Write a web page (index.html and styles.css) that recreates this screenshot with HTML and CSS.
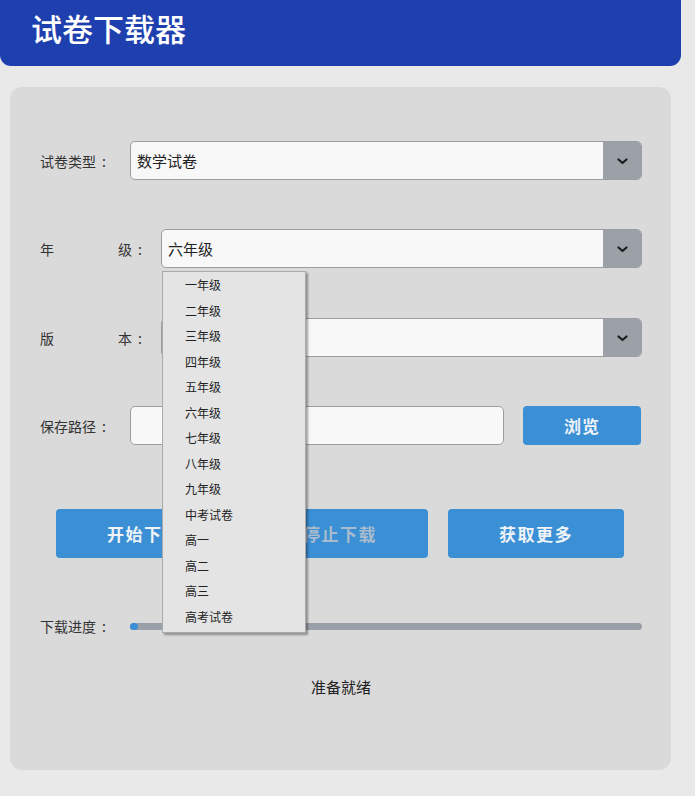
FILE: index.html
```html
<!DOCTYPE html>
<html lang="zh">
<head>
<meta charset="utf-8">
<title>试卷下载器</title>
<link rel="stylesheet" href="styles.css">
</head>
<body>
<div class="app">
  <header class="header"><h1 class="title">试卷下载器</h1></header>
  <main class="panel">
    <div class="row row-first">
      <div class="label">试卷类型<span class="colon">:</span></div>
      <div class="combo">
        <div class="combo-value">数学试卷</div>
        <div class="combo-arrow"><svg width="11" height="7" viewBox="0 0 11 7"><path d="M1.5 1.5 L5.5 5 L9.5 1.5" fill="none" stroke="#1e1e1e" stroke-width="2.2" stroke-linecap="round" stroke-linejoin="round"/></svg></div>
      </div>
    </div>
    <div class="row row-b">
      <div class="label label-split"><span>年</span><span>级<span class="colon">:</span></span></div>
      <div class="combo combo-open">
        <div class="combo-value">六年级</div>
        <div class="combo-arrow"><svg width="11" height="7" viewBox="0 0 11 7"><path d="M1.5 1.5 L5.5 5 L9.5 1.5" fill="none" stroke="#1e1e1e" stroke-width="2.2" stroke-linecap="round" stroke-linejoin="round"/></svg></div>
        <ul class="dropdown">
          <li>一年级</li><li>二年级</li><li>三年级</li><li>四年级</li><li>五年级</li><li>六年级</li><li>七年级</li><li>八年级</li><li>九年级</li><li>中考试卷</li><li>高一</li><li>高二</li><li>高三</li><li>高考试卷</li>
        </ul>
      </div>
    </div>
    <div class="row row-c">
      <div class="label label-split"><span>版</span><span>本<span class="colon">:</span></span></div>
      <div class="combo">
        <div class="combo-value"></div>
        <div class="combo-arrow"><svg width="11" height="7" viewBox="0 0 11 7"><path d="M1.5 1.5 L5.5 5 L9.5 1.5" fill="none" stroke="#1e1e1e" stroke-width="2.2" stroke-linecap="round" stroke-linejoin="round"/></svg></div>
      </div>
    </div>
    <div class="row row-b">
      <div class="label">保存路径<span class="colon">:</span></div>
      <div class="path-input"></div>
      <button class="btn btn-browse">浏览</button>
    </div>
    <div class="actions">
      <button class="btn btn-action">开始下载</button>
      <button class="btn btn-action btn-disabled">停止下载</button>
      <button class="btn btn-action">获取更多</button>
    </div>
    <div class="progress-row">
      <div class="label">下载进度<span class="colon">:</span></div>
      <div class="progress"><div class="progress-fill"></div></div>
    </div>
    <div class="status">准备就绪</div>
  </main>
</div>
</body>
</html>
```
FILE: styles.css
```css
* { box-sizing: border-box; }
html, body {
  margin: 0;
  padding: 0;
  background: #e9e9e9;
  font-family: "Noto Sans CJK SC", "Noto Sans", sans-serif;
}
.app {
  width: 695px;
  height: 796px;
  overflow: hidden;
}
.header {
  width: 681px;
  height: 66px;
  background: #1e40af;
  border-radius: 0 0 11px 11px;
  display: flex;
  align-items: center;
  padding-left: 31px;
  padding-bottom: 12px;
}
.title {
  margin: 0;
  color: #ffffff;
  font-size: 31px;
  font-weight: 500;
  letter-spacing: 0;
  line-height: 1;
}
.panel {
  margin: 21px 0 0 10px;
  width: 661px;
  height: 683px;
  background: #dadada;
  border-radius: 12px;
  padding: 54px 29px 0 30px;
  display: flex;
  flex-direction: column;
}
.row {
  display: flex;
  align-items: center;
  height: 39px;
}
.row-b { margin-top: 49px; }
.row-c { margin-top: 50px; }
.label {
  width: 90px;
  flex: none;
  font-size: 14px;
  color: #333;
}
.colon {
  margin-left: 6px;
}
.label-split {
  width: 121px;
  display: flex;
  justify-content: space-between;
  padding-right: 19px;
}
.combo {
  position: relative;
  flex: 1;
  height: 39px;
  display: flex;
  border: 1px solid #9a9ea4;
  border-radius: 5px;
  background: #f8f8f8;
}
.combo-value {
  flex: 1;
  padding-left: 6px;
  display: flex;
  align-items: center;
  font-size: 15px;
  color: #222;
}
.combo-arrow {
  width: 38px;
  background: #9ca1a8;
  border-radius: 0 4px 4px 0;
  display: flex;
  align-items: center;
  justify-content: center;
  padding-top: 2px;
}
.dropdown {
  position: absolute;
  left: 0;
  top: 41px;
  width: 144px;
  height: 362px;
  margin: 0;
  padding: 0;
  list-style: none;
  background: #e4e4e4;
  border: 1px solid #aaa;
  box-shadow: 2px 2px 2px rgba(0,0,0,0.35);
  z-index: 10;
}
.dropdown li {
  height: 25.5px;
  line-height: 25.5px;
  padding-left: 22px;
  font-size: 12px;
  color: #222;
}
.path-input {
  width: 374px;
  height: 39px;
  flex: none;
  background: #f8f8f8;
  border: 1px solid #9a9ea4;
  border-radius: 5px;
}
.btn {
  border: none;
  font-family: inherit;
  background: #3b8fd4;
  color: #eef3f8;
  font-weight: 700;
  border-radius: 4px;
  cursor: pointer;
}
.btn-browse {
  margin-left: 19px;
  width: 118px;
  height: 39px;
  font-size: 17px;
  letter-spacing: 1px;
}
.actions {
  display: flex;
  gap: 20px;
  margin-top: 64px;
  padding-left: 16px;
}
.btn-action {
  width: 176px;
  height: 49px;
  font-size: 17px;
  letter-spacing: 1.5px;
}
.btn-disabled { color: #a9bccf; }
.progress-row {
  display: flex;
  align-items: center;
  margin-top: 58px;
  height: 20px;
}
.progress {
  flex: 1;
  height: 7px;
  background: #9aa0a8;
  border-radius: 4px;
  position: relative;
}
.progress-fill {
  width: 8px;
  height: 7px;
  background: #3b8fd4;
  border-radius: 4px;
}
.status {
  margin-top: 40px;
  text-align: center;
  font-size: 15px;
  color: #222;
}
```
